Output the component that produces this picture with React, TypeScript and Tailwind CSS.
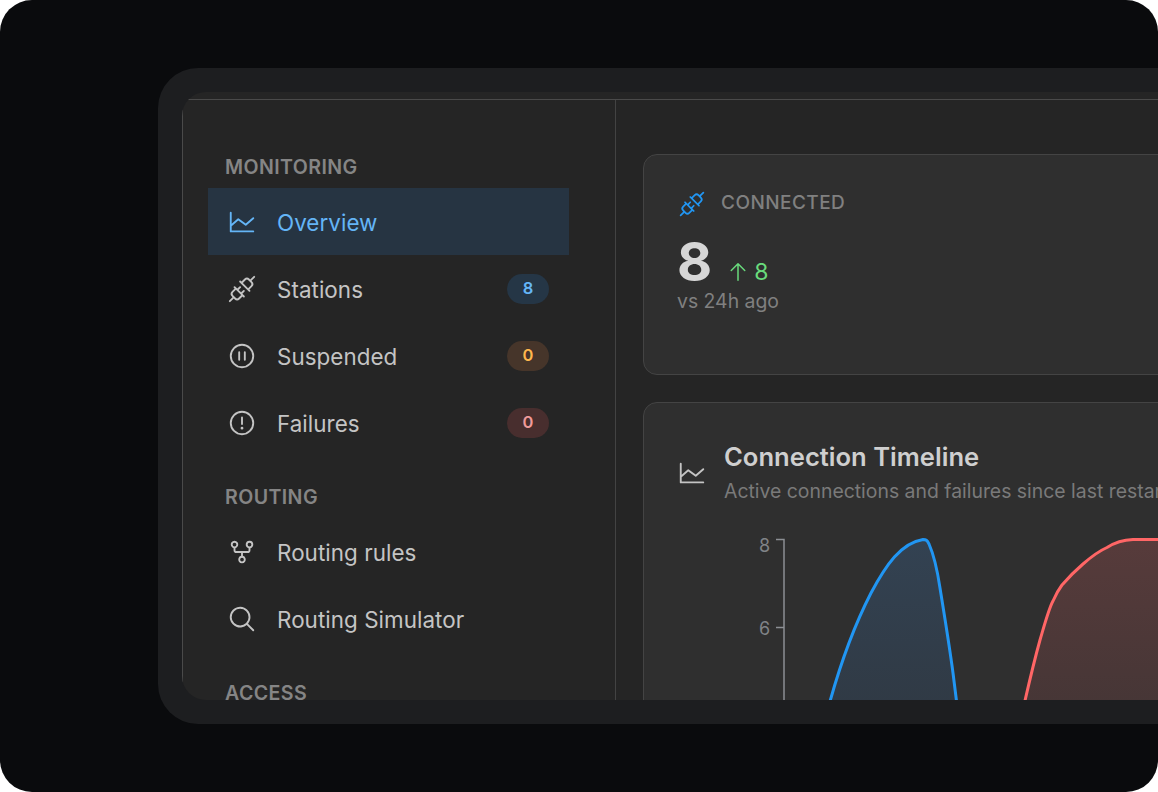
import { ReactNode } from 'react';
import {
  PiArrowUp,
  PiChartLine,
  PiGitFork,
  PiMagnifyingGlass,
  PiPauseCircle,
  PiPlugs,
  PiWarningCircle,
} from 'react-icons/pi';

function SectionLabel({ children, className = '' }: { children: ReactNode; className?: string }) {
  return (
    <div className={`flex h-[30px] items-center pl-[17px] pt-[2px] text-[19.6px] font-semibold tracking-[0.4px] text-[#858585] ${className}`}>
      {children}
    </div>
  );
}

function NavItem({
  icon,
  label,
  badge,
  active,
}: {
  icon: ReactNode;
  label: string;
  badge?: ReactNode;
  active?: boolean;
}) {
  return (
    <div
      className={`flex h-[67px] items-center pl-[19px] pr-[20px] ${
        active ? 'bg-[#263442] text-[#64b5f6]' : 'text-[#c4c4c4]'
      }`}
    >
      <span className="flex w-[50px] shrink-0 items-center text-[30px]">{icon}</span>
      <span className="flex-1 pt-[3px] text-[22.4px] leading-none tracking-[0.05px]">{label}</span>
      {badge}
    </div>
  );
}

function Badge({ value, className }: { value: string; className: string }) {
  return (
    <span className={`flex h-[30px] w-[42px] items-center justify-center rounded-full text-[16.500px] font-semibold ${className}`}>
      {value}
    </span>
  );
}

function Sidebar() {
  return (
    <aside className="h-full w-[433px] shrink-0 border-r border-[#434343] pl-[25px] pr-[46px] pt-[52px]">
      <SectionLabel className="mb-[6px]">MONITORING</SectionLabel>
      <NavItem active icon={<PiChartLine />} label="Overview" />
      <NavItem
        icon={<PiPlugs />}
        label="Stations"
        badge={<Badge value="8" className="bg-[#253646] text-[#64b5f6]" />}
      />
      <NavItem
        icon={<PiPauseCircle />}
        label="Suspended"
        badge={<Badge value="0" className="bg-[#46352a] text-[#ffb74d]" />}
      />
      <NavItem
        icon={<PiWarningCircle />}
        label="Failures"
        badge={<Badge value="0" className="bg-[#482e2e] text-[#ef9a9a]" />}
      />
      <SectionLabel className="mb-[6px] mt-[26px]">ROUTING</SectionLabel>
      <NavItem icon={<PiGitFork />} label="Routing rules" />
      <NavItem icon={<PiMagnifyingGlass />} label="Routing Simulator" />
      <SectionLabel className="mt-[26px]">ACCESS</SectionLabel>
    </aside>
  );
}

function StatCard() {
  return (
    <section className="h-[221px] w-[900px] rounded-[14px] border border-[#444444] bg-[#2f2f2f] pl-[34px] pt-[32px]">
      <div className="flex h-[30px] items-center gap-[15px] pt-[3px]">
        <PiPlugs className="text-[28px] text-[#2196f3]" />
        <span className="text-[19px] font-medium tracking-[0.45px] text-[#808080]">CONNECTED</span>
      </div>
      <div className="mt-[16px] flex h-[56px] items-center">
        <span className="-ml-px mt-[2px] text-[54px] font-bold leading-none text-[#d6d6d6]">8</span>
        <span className="ml-[14px] mt-[22px] flex items-center gap-[4px] text-[23px] leading-none text-[#69db7c]">
          <PiArrowUp className="text-[24px]" />8
        </span>
      </div>
      <p className="-ml-px text-[19.400px] leading-[24px] text-[#808080]">vs 24h ago</p>
    </section>
  );
}

function TimelineChart() {
  const blueLine =
    'M88 172C99 132 112 95 130 60C145 32 160 10 182 6.500C185 6.500 186 7 188 11C192 20 196 35 199 55C203 80 208 110 212 140L216 172';
  const redLine =
    'M283 172C288 150 294 125 299 107C304 90 308 75 312 68C315 61 318 56 321 52C328 44 335 37 342 31C350 24 358 18 366 14.500C373 10 380 7 392 6.500H420';

  return (
    <svg viewBox="0 0 420 172" className="ml-[63px] mt-[28px] block h-[172px] w-[420px] overflow-visible">
      <defs>
        <linearGradient id="blueFill" x1="0" y1="0" x2="0" y2="1">
          <stop offset="0" stopColor="#334252" />
          <stop offset="1" stopColor="#303a45" />
        </linearGradient>
        <linearGradient id="redFill" x1="0" y1="0" x2="0" y2="1">
          <stop offset="0" stopColor="#573b3b" />
          <stop offset="1" stopColor="#463636" />
        </linearGradient>
      </defs>
      <path d="M35 6.500H43V172M35 94.500H43" fill="none" stroke="#8c8f94" strokeWidth="1.5" />
      <text x="18" y="19" fontSize="18" fill="#808387">8</text>
      <text x="18" y="102" fontSize="18" fill="#808387">6</text>
      <path d={`${blueLine}Z`} fill="url(#blueFill)" />
      <path d={blueLine} fill="none" stroke="#2196f3" strokeWidth="3" />
      <path d={`${redLine}V172Z`} fill="url(#redFill)" />
      <path d={redLine} fill="none" stroke="#ff6666" strokeWidth="3" />
    </svg>
  );
}

function TimelineCard() {
  return (
    <section className="mt-[27px] w-[900px] rounded-t-[14px] border border-[#444444] bg-[#2f2f2f] pb-[40px] pl-[34px] pt-[38px]">
      <div className="flex items-center">
        <PiChartLine className="-ml-px mr-[17px] shrink-0 text-[30px] text-[#c4c4c4]" />
        <div>
          <h2 className="text-[25.600px] font-semibold leading-[32px] text-[#cfcfcf]">Connection Timeline</h2>
          <p className="mt-[5px] whitespace-nowrap text-[19.400px] leading-[27px] text-[#7a7a7a]">
            Active connections and failures since last restart
          </p>
        </div>
      </div>
      <TimelineChart />
    </section>
  );
}

export default function App() {
  return (
    <div className="h-[792px] w-[1158px] overflow-hidden bg-white font-['Inter',sans-serif]">
      <div className="h-full overflow-hidden rounded-[32px] bg-[#0a0b0d] pl-[158px] pt-[68px]">
        <div className="h-[656px] rounded-l-[40px] bg-[#1d1e20] py-[24px] pl-[24px]">
          <div className="h-full overflow-hidden rounded-l-[24px] bg-[#252525]">
            <div className="flex h-full flex-col border-l border-[#4a4a4a]">
              <div className="h-[8px] shrink-0 border-b border-[#4a4a4a]" />
              <div className="flex min-h-0 flex-1">
                <Sidebar />
                <main className="min-w-0 flex-1 overflow-hidden pl-[27px] pt-[54px]">
                  <StatCard />
                  <TimelineCard />
                </main>
              </div>
            </div>
          </div>
        </div>
      </div>
    </div>
  );
}
